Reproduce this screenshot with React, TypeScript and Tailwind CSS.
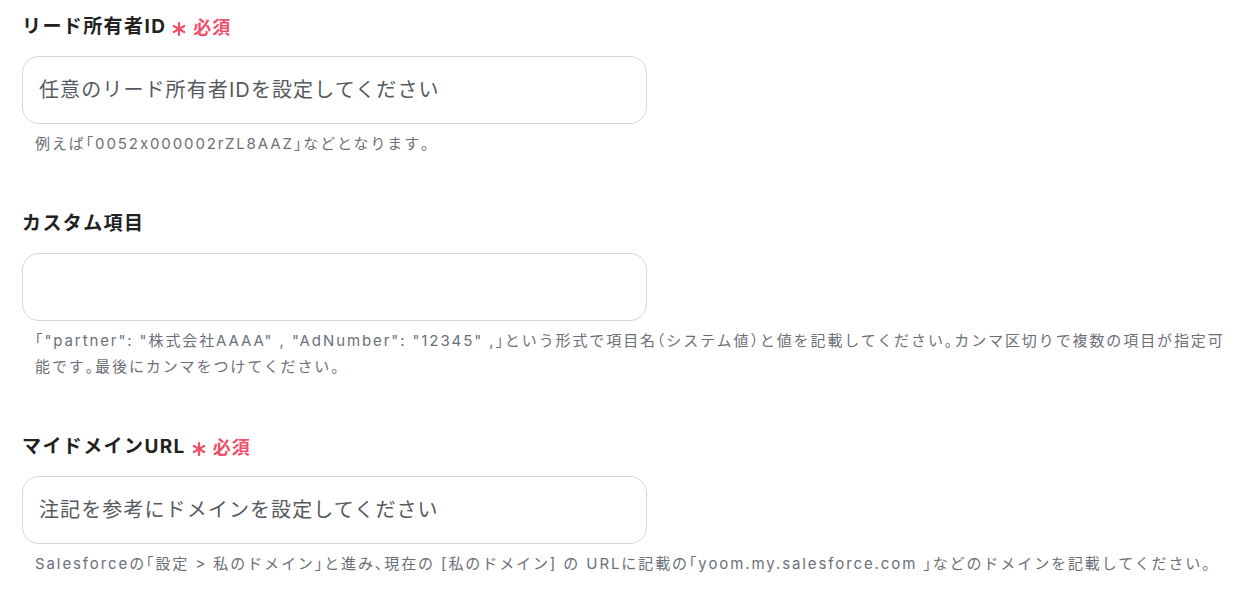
import React from 'react';

const font = { fontFamily: 'Inter, "Noto Sans CJK JP", sans-serif' };

// 約物（「」。、（））だけ半角幅で詰める
function Tight({ text }: { text: string }) {
  const parts = text.split(/([「」。、（）])/);
  return (
    <>
      {parts.map((p, i) =>
        /^[「」。、（）]$/.test(p) ? (
          <span key={i} className="[font-feature-settings:'halt']">
            {p}
          </span>
        ) : (
          <React.Fragment key={i}>{p}</React.Fragment>
        )
      )}
    </>
  );
}

function Required() {
  return (
    <span className="ml-1.5 inline-flex items-center gap-[7px] text-[18px] font-bold tracking-[1px] text-[#f0506a]">
      <svg width="14" height="14" viewBox="0 0 14 14" className="mt-1" aria-hidden>
        <g stroke="#f0506a" strokeWidth="2.2" strokeLinecap="round">
          <line x1="7" y1="1" x2="7" y2="13" />
          <line x1="1.8" y1="4" x2="12.2" y2="10" />
          <line x1="1.8" y1="10" x2="12.2" y2="4" />
        </g>
      </svg>
      必須
    </span>
  );
}

function Field({
  label,
  required,
  placeholder,
  help,
}: {
  label: string;
  required?: boolean;
  placeholder?: string;
  help: string;
}) {
  return (
    <div className="flex flex-col">
      <div className="flex h-7 items-center text-[19px] font-bold tracking-[1.4px] text-[#222]">
        {label}
        {required && <Required />}
      </div>
      <div className="mt-[15px] flex h-[68px] w-[625px] items-center rounded-[17px] border border-[#d4d7dd] bg-white px-4 text-[20px] tracking-[1.1px] text-[#555a60]">
        {placeholder}
      </div>
      <div className="mt-[7px] pl-[13px] text-[15px] leading-[26px] tracking-[1.9px] text-[#6b7078]">
        <Tight text={help} />
      </div>
    </div>
  );
}

export default function App() {
  return (
    <div className="min-h-[596px] bg-white px-[22px] pt-[13px]" style={font}>
      <div className="flex flex-col gap-[53px]">
        <Field
          label="リード所有者ID"
          required
          placeholder="任意のリード所有者IDを設定してください"
          help="例えば「0052x000002rZL8AAZ」などとなります。"
        />
        <Field
          label="カスタム項目"
          help={'「"partner": "株式会社AAAA" , "AdNumber": "12345" ,」という形式で項目名（システム値）と値を記載してください。カンマ区切りで複数の項目が指定可能です。最後にカンマをつけてください。'}
        />
        <Field
          label="マイドメインURL"
          required
          placeholder="注記を参考にドメインを設定してください"
          help="Salesforceの「設定 > 私のドメイン」と進み、現在の [私のドメイン] の URLに記載の「yoom.my.salesforce.com 」などのドメインを記載してください。"
        />
      </div>
    </div>
  );
}
